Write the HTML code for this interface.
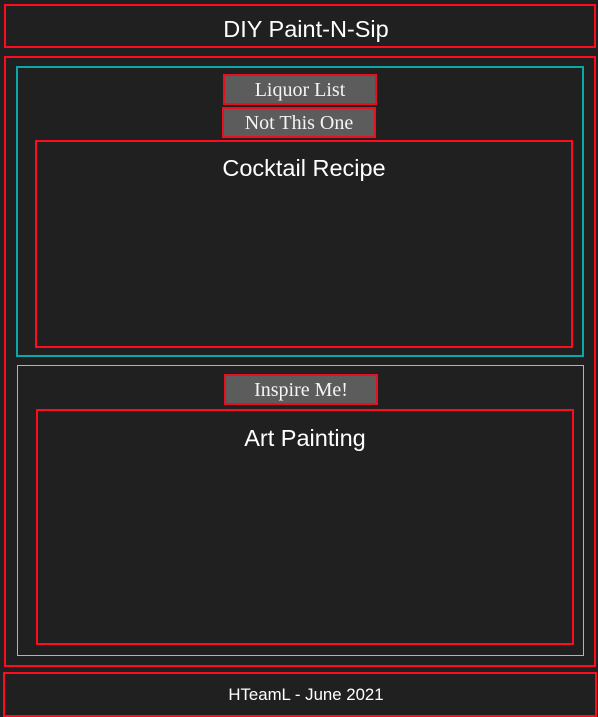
<!DOCTYPE html>
<html><head><style>
body{margin:0;width:598px;height:717px;background:#202020;position:relative;overflow:hidden;font-family:"Liberation Sans",sans-serif;color:#fff}
div{position:absolute;box-sizing:border-box}
.r{border:2px solid #ff0a1e}
.b{background:#5c5c5c;border:2px solid #e8101e;font-family:"Liberation Serif",serif;font-size:20px;text-align:center;line-height:28px;color:#f4f4f4}
.t{left:0;right:0;text-align:center}
</style></head><body>
<div class="r" style="left:4px;top:4px;width:592px;height:44px"><div class="t" style="top:10px;font-size:23.5px;line-height:26px;padding-left:12px">DIY Paint-N-Sip</div></div>
<div class="r" style="left:4px;top:56px;width:592px;height:611px"></div>
<div style="left:16px;top:66px;width:568px;height:291px;border:2px solid #0aa8a8"></div>
<div style="left:17px;top:365px;width:567px;height:291px;border:1px solid #00ffff"></div>
<div class="b" style="left:223px;top:74px;width:154px;height:31px">Liquor List</div>
<div class="b" style="left:222px;top:107px;width:154px;height:31px">Not This One</div>
<div class="b" style="left:224px;top:374px;width:154px;height:31px">Inspire Me!</div>
<div class="r" style="left:35px;top:140px;width:538px;height:208px"><div class="t" style="top:13px;font-size:23.5px;line-height:26px">Cocktail Recipe</div></div>
<div class="r" style="left:36px;top:409px;width:538px;height:236px"><div class="t" style="top:14px;font-size:23.5px;line-height:26px">Art Painting</div></div>
<div class="r" style="left:3px;top:672px;width:594px;height:45px"><div class="t" style="top:11px;font-size:16.8px;line-height:20px;padding-left:12px">HTeamL - June 2021</div></div>
</body></html>
